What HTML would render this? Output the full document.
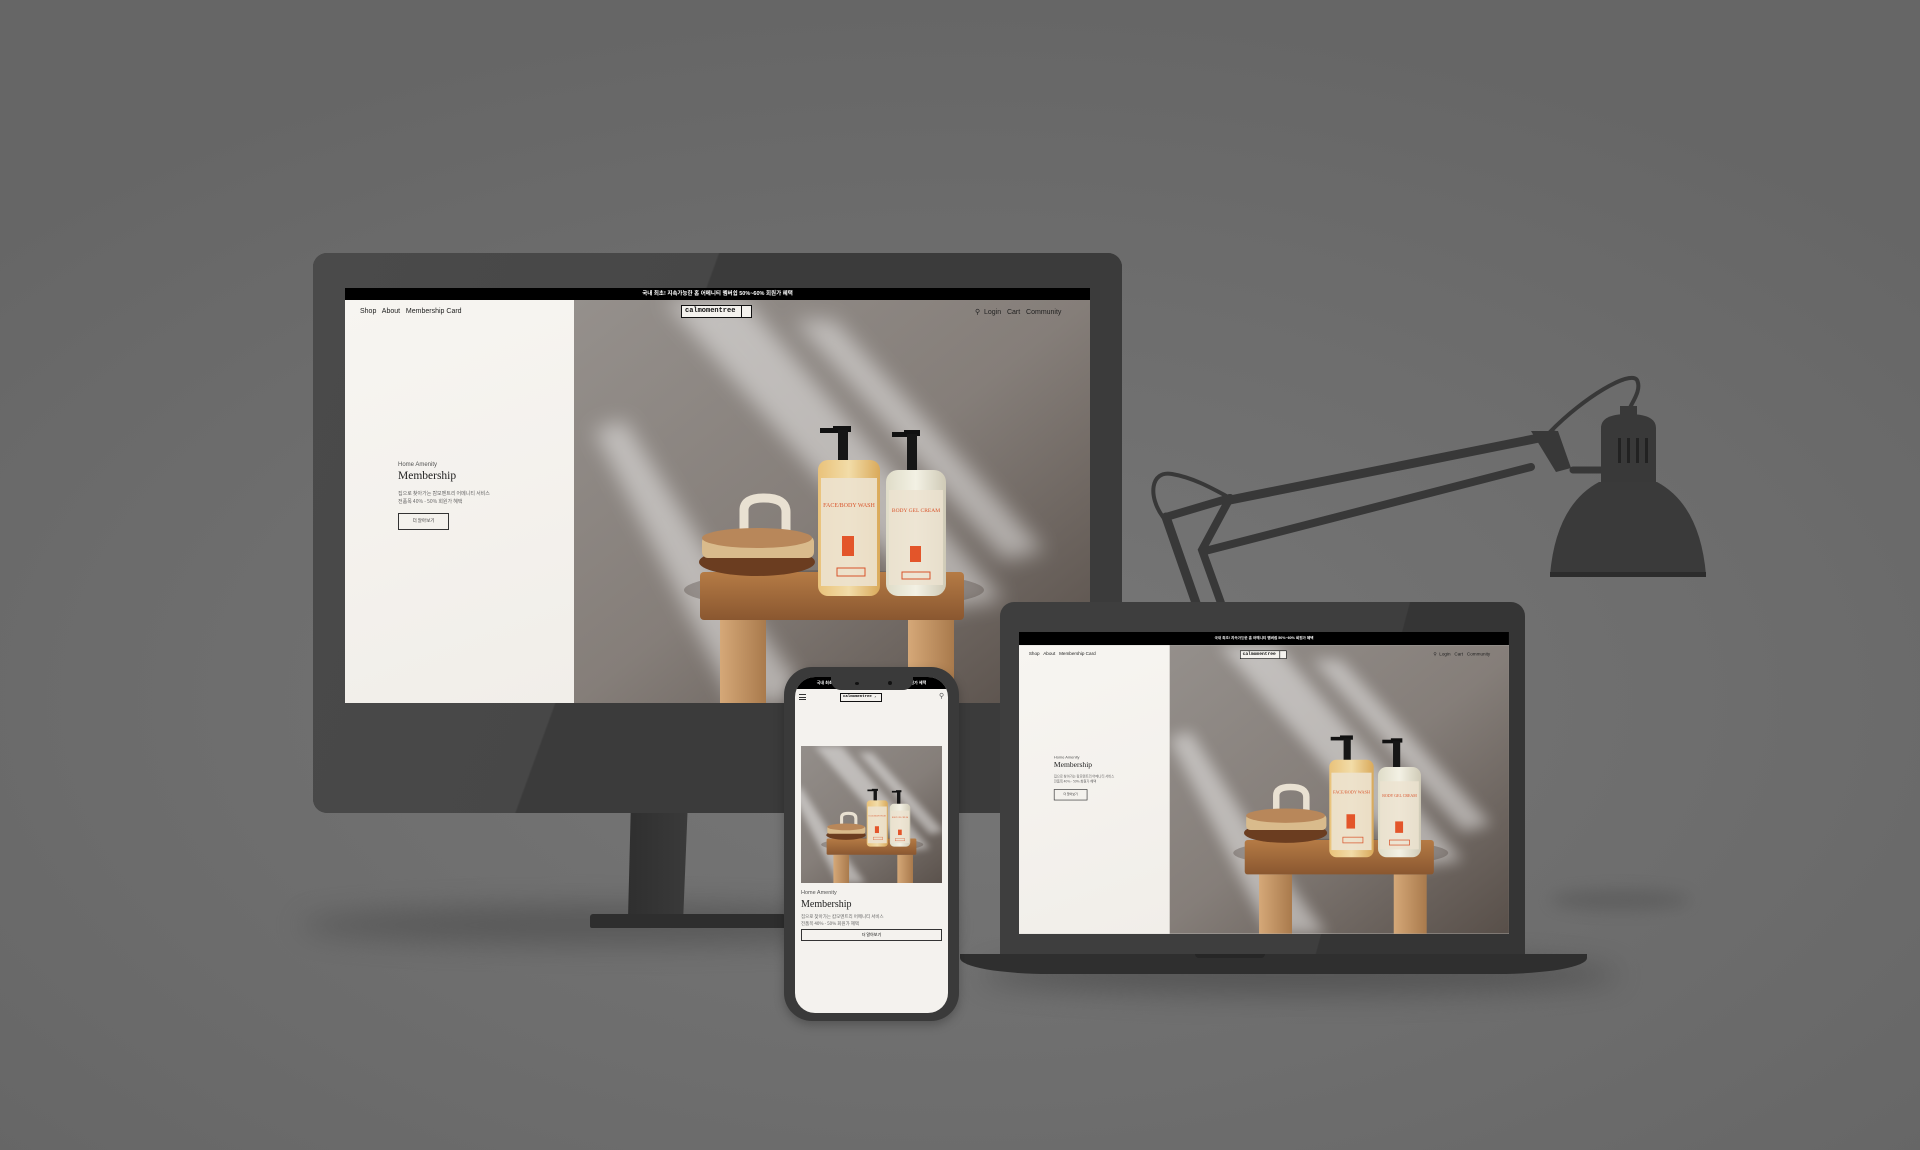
<!DOCTYPE html>
<html><head><meta charset="utf-8">
<style>
*{margin:0;padding:0;box-sizing:border-box}
html,body{width:1920px;height:1150px;overflow:hidden}
body{position:relative;background:radial-gradient(ellipse 1300px 700px at 960px 700px,#777 0%,#6e6e6e 55%,#666 100%);font-family:"Liberation Sans","Noto Sans CJK KR",sans-serif}
.abs{position:absolute}
.site{position:absolute;left:0;top:0;width:745px;overflow:hidden;background:#f4f2ee;transform-origin:0 0}
.bar{position:absolute;left:0;top:0;width:100%;height:12px;background:#000;color:#fff;font-size:5.5px;font-weight:bold;text-align:center;line-height:12px;font-family:"Liberation Sans","Noto Sans CJK KR",sans-serif}
.left{position:absolute;left:0;top:12px;width:229px;bottom:0;background:linear-gradient(160deg,#f7f5f1,#f1eee9)}
.photo{position:absolute;left:229px;top:12px;right:0;bottom:0}
.photo svg{width:100%;height:100%;display:block}
.nav{position:absolute;top:20px;font-size:7px;color:#222;white-space:nowrap}
.logo{position:absolute;left:336px;top:17px;width:71px;height:13px;border:1.5px solid #111;background:#f4f2ee;font-family:"Liberation Mono",monospace;font-size:7px;font-weight:bold;line-height:10px;padding-left:3px;color:#111}
.logo i{position:absolute;right:9px;top:0;bottom:0;border-left:1px solid #111}
.content{position:absolute;left:53px;top:calc(50% - 34px)}
.content .s{font-size:6px;color:#555}
.content .t{font-family:"Liberation Serif",serif;font-size:11.5px;color:#222;margin-top:2px}
.content .k{font-family:"Noto Sans CJK KR",sans-serif;font-size:5px;color:#666;margin-top:8px;line-height:8px}
.content .b{margin-top:7px;width:51px;height:17px;border:1px solid #333;font-family:"Noto Sans CJK KR",sans-serif;font-size:4.5px;text-align:center;line-height:15px;color:#333}
</style></head><body>

<svg width="0" height="0" style="position:absolute">
<defs>
<linearGradient id="wall" x1="0" y1="0" x2="1" y2="1">
<stop offset="0" stop-color="#95908c"/><stop offset=".5" stop-color="#857e79"/><stop offset="1" stop-color="#564d47"/></linearGradient>
<linearGradient id="wood" x1="0" y1="0" x2="0" y2="1"><stop offset="0" stop-color="#b57b45"/><stop offset="1" stop-color="#8a5730"/></linearGradient>
<linearGradient id="leg" x1="0" y1="0" x2="1" y2="0"><stop offset="0" stop-color="#d5a878"/><stop offset="1" stop-color="#a97a4c"/></linearGradient>
<linearGradient id="b1" x1="0" y1="0" x2="1" y2="0"><stop offset="0" stop-color="#e9c27a"/><stop offset=".5" stop-color="#f2dca8"/><stop offset="1" stop-color="#d9a95a"/></linearGradient>
<linearGradient id="b2" x1="0" y1="0" x2="1" y2="0"><stop offset="0" stop-color="#dfdcc8"/><stop offset=".5" stop-color="#f3f1e4"/><stop offset="1" stop-color="#cfcab6"/></linearGradient>
<filter id="bl"><feGaussianBlur stdDeviation="10"/></filter>
<symbol id="scene" viewBox="0 0 516 403" preserveAspectRatio="xMidYMid slice">
<rect width="516" height="403" fill="url(#wall)"/>
<g filter="url(#bl)" fill="#fff" opacity=".45">
<polygon points="90,0 170,0 430,300 360,310"/>
<polygon points="220,20 260,20 470,250 430,260"/>
<polygon points="20,130 50,120 230,403 160,403"/>
<polygon points="80,230 105,220 240,403 200,403"/>
</g>
<ellipse cx="260" cy="290" rx="150" ry="20" fill="#4a403a" opacity=".35"/>
<rect x="146" y="320" width="46" height="83" fill="url(#leg)"/>
<rect x="334" y="320" width="46" height="83" fill="url(#leg)"/>
<rect x="126" y="272" width="264" height="48" rx="4" fill="url(#wood)"/>
<path d="M170 248 V210 Q170 198 190 198 Q212 198 212 212 V245" fill="none" stroke="#e9e1d2" stroke-width="9"/>
<ellipse cx="183" cy="262" rx="58" ry="14" fill="#6b3d20"/>
<rect x="128" y="236" width="112" height="22" rx="6" fill="#d9bb8c"/>
<ellipse cx="183" cy="238" rx="55" ry="10" fill="#b8875a"/>
<rect x="259" y="126" width="18" height="6" fill="#111"/><rect x="246" y="128" width="18" height="5" fill="#111"/>
<rect x="264" y="130" width="10" height="36" fill="#161616"/>
<rect x="244" y="160" width="62" height="136" rx="10" fill="url(#b1)"/>
<rect x="247" y="178" width="56" height="108" fill="#ece2cf" opacity=".9"/>
<text x="275" y="207" font-family="Liberation Serif" font-size="6" fill="#d8532a" text-anchor="middle">FACE/BODY WASH</text>
<rect x="268" y="236" width="12" height="20" fill="#e3552a"/>
<rect x="263" y="268" width="28" height="8" fill="none" stroke="#d8532a" stroke-width="1"/>
<rect x="330" y="130" width="16" height="6" fill="#111"/><rect x="318" y="132" width="16" height="5" fill="#111"/>
<rect x="333" y="134" width="10" height="40" fill="#161616"/>
<rect x="312" y="170" width="60" height="126" rx="12" fill="url(#b2)"/>
<rect x="315" y="190" width="54" height="95" fill="#ece2cf" opacity=".8"/>
<text x="342" y="212" font-family="Liberation Serif" font-size="5.5" fill="#d8532a" text-anchor="middle">BODY GEL CREAM</text>
<rect x="336" y="246" width="11" height="16" fill="#e3552a"/>
<rect x="328" y="272" width="28" height="7" fill="none" stroke="#d8532a" stroke-width="1"/>
</symbol>
</defs></svg>

<!-- floor shadows -->
<div class="abs" style="left:300px;top:905px;width:650px;height:40px;border-radius:50%;background:#4f4f4f;filter:blur(14px);opacity:.7"></div>
<div class="abs" style="left:980px;top:955px;width:640px;height:40px;border-radius:50%;background:#4a4a4a;filter:blur(14px);opacity:.7"></div>
<div class="abs" style="left:1550px;top:890px;width:140px;height:20px;border-radius:50%;background:#555;filter:blur(8px);opacity:.6"></div>

<!-- lamp -->
<svg class="abs" style="left:0;top:0" width="1920" height="1150">
<g stroke="#383838" stroke-linecap="round" fill="none">
<path d="M1166 517 L1196 603" stroke-width="9"/>
<path d="M1230 498 L1202 550 L1221 603" stroke-width="8"/>
<path d="M1166 517 L1230 498" stroke-width="8"/>
<path d="M1163 517 C1148 497 1150 470 1172 474 C1195 478 1215 490 1230 498" stroke-width="4"/>
<path d="M1225 501 L1554 435" stroke-width="9"/>
<path d="M1205 551 L1531 467" stroke-width="8"/>
<path d="M1550 432 C1584 397 1630 370 1637 380 C1642 390 1632 402 1629 410" stroke-width="4"/>
<path d="M1573 470 L1601 470" stroke-width="7"/>
</g>
<polygon points="1531,431 1558,431 1571,468 1556,472" fill="#383838"/>
<path d="M1601 482 V428 Q1601 414 1628 414 Q1656 414 1656 428 V482 Z" fill="#393939"/>
<rect x="1620" y="406" width="17" height="10" fill="#393939"/>
<g fill="#222"><rect x="1618" y="438" width="3" height="25"/><rect x="1627" y="438" width="3" height="25"/><rect x="1636" y="438" width="3" height="25"/><rect x="1645" y="438" width="3" height="25"/></g>
<path d="M1599 482 L1657 482 Q1700 505 1706 575 L1550 575 Q1556 505 1599 482 Z" fill="#3a3a3a"/>
<rect x="1550" y="572" width="156" height="5" fill="#2c2c2c"/>
</svg>

<!-- monitor stand -->
<div class="abs" style="left:628px;top:800px;width:60px;height:118px;background:linear-gradient(90deg,#2f2f2f,#3a3a3a);clip-path:polygon(5% 0,100% 0,92% 100%,0 100%)"></div>
<div class="abs" style="left:590px;top:914px;width:196px;height:14px;background:#2e2e2e;border-radius:3px 3px 2px 2px"></div>

<!-- monitor -->
<div class="abs" style="left:313px;top:253px;width:809px;height:560px;border-radius:14px;background:#3b3b3b;overflow:hidden">
 <div class="abs" style="left:0;top:0;width:100%;height:100%;background:linear-gradient(110deg,#4a4a4a 0,#474747 40%,#3b3b3b 40.2%)"></div>
 <div class="abs" style="left:32px;top:35px;width:745px;height:415px">
  <div class="site" style="height:415px">
   <div class="bar">국내 최초! 지속가능한 홈 어메니티 멤버쉽 50%~60% 회원가 혜택</div>
   <div class="left"></div>
   <div class="photo"><svg><use href="#scene" width="100%" height="100%"/></svg></div>
   <div class="nav" style="left:15px">Shop &nbsp; About &nbsp; Membership Card</div>
   <div class="logo">calmomentree<i></i></div>
   <div class="nav" style="left:630px">⚲ &nbsp;Login &nbsp; Cart &nbsp; Community</div>
   <div class="content"><div class="s">Home Amenity</div><div class="t">Membership</div><div class="k">집으로 찾아가는 캄모멘트리 어메니티 서비스<br>전품목 40% - 50% 회원가 혜택</div><div class="b">더 알아보기</div></div>
  </div>
 </div>
</div>

<!-- laptop -->
<div class="abs" style="left:1000px;top:602px;width:525px;height:356px;border-radius:14px 14px 0 0;background:linear-gradient(105deg,#3e3e3e 0,#3e3e3e 66%,#353535 66.2%)">
 <div class="abs" style="left:19px;top:30px;width:490px;height:302px;overflow:hidden">
  <div class="site" style="height:459px;transform:scale(0.6577)">
   <div class="bar" style="height:20px;line-height:20px">국내 최초! 지속가능한 홈 어메니티 멤버쉽 50%~60% 회원가 혜택</div>
   <div class="left" style="top:20px"></div>
   <div class="photo" style="top:20px"><svg><use href="#scene" width="100%" height="100%"/></svg></div>
   <div class="nav" style="left:15px;top:30px">Shop &nbsp; About &nbsp; Membership Card</div>
   <div class="logo" style="top:28px">calmomentree<i></i></div>
   <div class="nav" style="left:630px;top:30px">⚲ &nbsp;Login &nbsp; Cart &nbsp; Community</div>
   <div class="content" style="top:calc(50% - 42px)"><div class="s">Home Amenity</div><div class="t">Membership</div><div class="k">집으로 찾아가는 캄모멘트리 어메니티 서비스<br>전품목 40% - 50% 회원가 혜택</div><div class="b">더 알아보기</div></div>
  </div>
 </div>
</div>
<div class="abs" style="left:960px;top:954px;width:627px;height:20px;background:#2f2f2f;border-radius:0 0 90px 90px / 0 0 16px 16px"></div>
<div class="abs" style="left:1195px;top:954px;width:70px;height:4px;background:#262626;border-radius:0 0 4px 4px"></div>

<!-- phone -->
<div class="abs" style="left:784px;top:667px;width:175px;height:354px;border-radius:28px;background:#3a3a3a;box-shadow:0 4px 10px rgba(0,0,0,.25)">
 <div class="abs" style="left:11px;top:10px;width:153px;height:336px;border-radius:20px;background:#f4f2ee;overflow:hidden">
  <div class="abs" style="left:0;top:0;width:100%;height:12px;background:#000;color:#fff;font-size:4px;font-weight:bold;line-height:12px;text-align:center">국내 최초! 지속가능한 홈 어메니티 멤버쉽 50%~60% 회원가 혜택</div>
  <div class="abs" style="left:36px;top:0;width:82px;height:13px;background:#3a3a3a;border-radius:0 0 10px 10px"></div>
  <div class="abs" style="left:60px;top:5px;width:4px;height:3px;border-radius:50%;background:#111"></div>
  <div class="abs" style="left:93px;top:4px;width:4px;height:4px;border-radius:50%;background:#111"></div>
  <div class="abs" style="left:4px;top:17px;width:7px;height:6px;border-top:1px solid #333;border-bottom:1px solid #333"></div>
  <div class="abs" style="left:4px;top:19.5px;width:7px;height:1px;background:#333"></div>
  <div class="abs" style="left:45px;top:16px;width:42px;height:9px;border:1px solid #111;font-family:'Liberation Mono',monospace;font-size:4px;line-height:7px;padding-left:2px;font-weight:bold">calmomentree ,</div>
  <div class="abs" style="left:144px;top:15px;font-size:7px;color:#555">⚲</div>
  <div class="abs" style="left:6px;top:69px;width:141px;height:137px"><svg width="141" height="137"><use href="#scene" width="141" height="137"/></svg></div>
  <div class="abs" style="left:6px;top:213px;font-size:5.5px;color:#555">Home Amenity</div>
  <div class="abs" style="left:6px;top:222px;font-family:'Liberation Serif',serif;font-size:10px;color:#222">Membership</div>
  <div class="abs" style="left:6px;top:237px;font-family:'Noto Sans CJK KR',sans-serif;font-size:4.5px;line-height:7px;color:#666">집으로 찾아가는 캄모멘트리 어메니티 서비스<br>전품목 40% - 50% 회원가 혜택</div>
  <div class="abs" style="left:6px;top:252px;width:141px;height:12px;border:1px solid #333;font-family:'Noto Sans CJK KR',sans-serif;font-size:4px;text-align:center;line-height:10px">더 알아보기</div>
 </div>
</div>

</body></html>
